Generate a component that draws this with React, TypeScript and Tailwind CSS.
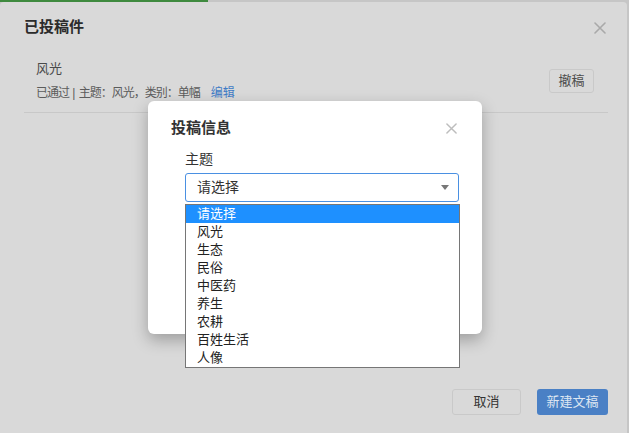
import React from 'react';

const CloseIcon = ({ size, color }: { size: number; color: string }) => (
  <svg width={size} height={size} viewBox="0 0 12 12" fill="none">
    <path d="M1 1L11 11M11 1L1 11" stroke={color} strokeWidth="1.6" strokeLinecap="round" />
  </svg>
);

const options = ['请选择', '风光', '生态', '民俗', '中医药', '养生', '农耕', '百姓生活', '人像'];

const App = () => {
  return (
    <div className="relative w-[629px] h-[433px] overflow-hidden bg-[#c6c6c6] font-['Liberation_Sans','Noto_Sans_CJK_SC',sans-serif]">
      <div className="flex h-[2px]">
        <div className="w-[208px] bg-[#3f8a3f]" />
      </div>

      {/* outer modal, dimmed */}
      <div className="flex flex-col h-[440px] w-[627px] rounded-[4px] bg-[#d9d9d9] pl-6 pr-[19px]">
        <div className="flex items-center justify-between h-[20px] mt-[15px]">
          <h2 className="text-[15px] font-bold text-[#2b2b2b] leading-[20px]">已投稿件</h2>
          <div className="mr-[2px] mt-[2px]">
            <CloseIcon size={12} color="#a9a9a9" />
          </div>
        </div>

        <div className="flex items-start justify-between pl-3 pr-[14px] mt-[23px]">
          <div className="flex flex-col">
            <div className="text-[13px] leading-[18px] text-[#4a4a4a]">风光</div>
            <div className="mt-[7px] text-[12px] leading-[16px] text-[#5c5c5c] whitespace-pre">
              <span className="tracking-[-1px]">已通过</span>
              {' | '}
              <span className="tracking-[-1px]">主题：风光，类别：单幅</span>
              <span className="ml-[11px] text-[#3f7bc6]">编辑</span>
            </div>
          </div>
          <button className="mt-[9px] h-[24px] w-[45px] rounded-[3px] border border-[#c9c9c9] text-[13px] text-[#4d4d4d]">
            撤稿
          </button>
        </div>

        <div className="mt-[11px] h-px bg-[#c8c8c8]" />

        <div className="flex justify-end gap-4 mt-[276px]">
          <button className="h-[26px] w-[69px] rounded-[3px] border border-[#c9c9c9] text-[13px] text-[#333]">
            取消
          </button>
          <button className="h-[26px] w-[71px] rounded-[3px] bg-[#4a80c5] text-[13px] text-[#dde6f2]">
            新建文稿
          </button>
        </div>
      </div>

      {/* inner modal */}
      <div className="absolute left-[148px] top-[101px] w-[334px] h-[233px] rounded-[6px] bg-white shadow-[0_6px_16px_rgba(0,0,0,0.28)]">
        <div className="flex items-center justify-between pl-[23px] pr-[25px] pt-[17px]">
          <h3 className="text-[15px] font-bold leading-[20px] text-[#333]">投稿信息</h3>
          <CloseIcon size={11} color="#bdbdbd" />
        </div>
        <div className="pl-[37px] mt-[12px]">
          <div className="text-[14px] leading-[18px] text-[#333]">主题</div>
          <div className="mt-[5px] flex h-[29px] w-[274px] items-center justify-between rounded-[3px] border border-[#4a90e2] pl-[11px] pr-[9px]">
            <span className="text-[14px] text-[#333]">请选择</span>
            <svg width="8" height="5" viewBox="0 0 8 5">
              <path d="M0 0H8L4 5Z" fill="#777" />
            </svg>
          </div>
        </div>
      </div>

      {/* open select list */}
      <ul className="absolute left-[185px] top-[204px] w-[275px] border border-[#767676] bg-white">
        {options.map((opt, i) => (
          <li
            key={opt}
            className={`h-[18px] pl-[11px] text-[13px] leading-[18px] ${
              i === 0 ? 'bg-[#1e90ff] text-white' : 'text-[#222]'
            }`}
          >
            {opt}
          </li>
        ))}
      </ul>
    </div>
  );
};

export default App;
